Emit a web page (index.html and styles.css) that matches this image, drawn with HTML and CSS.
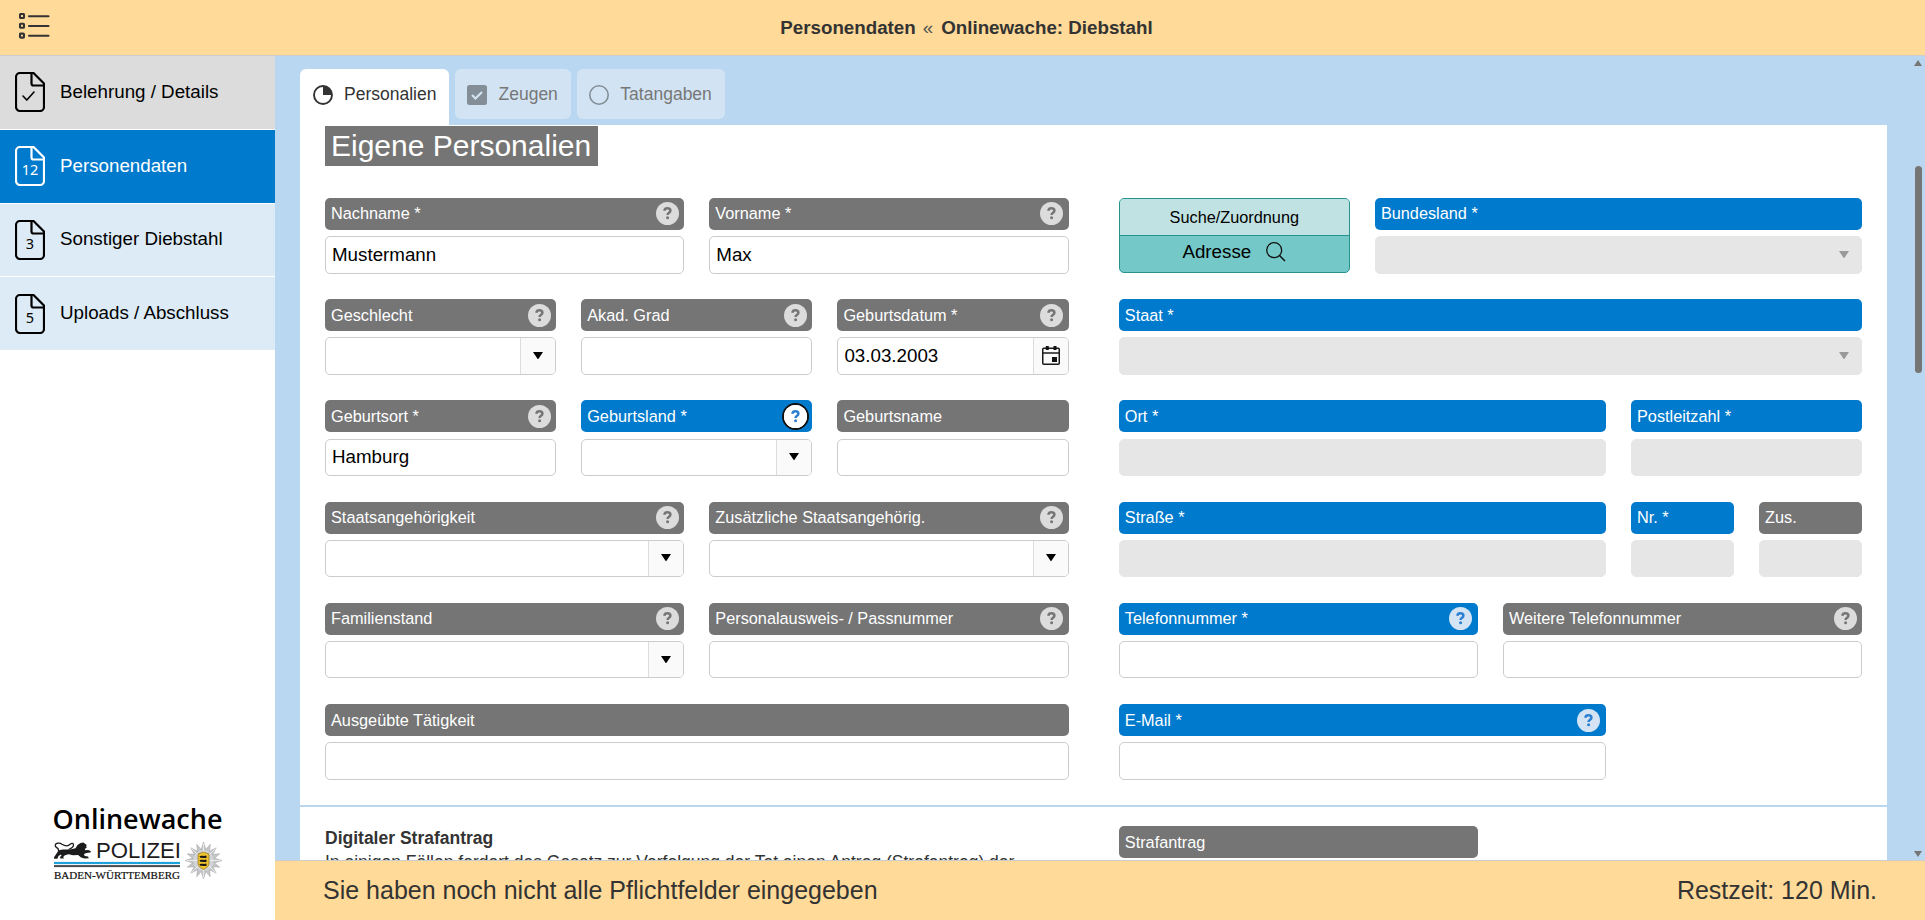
FILE: index.html
```html
<!DOCTYPE html>
<html lang="de">
<head>
<meta charset="utf-8">
<title>Onlinewache: Diebstahl</title>
<link rel="stylesheet" href="styles.css">
</head>
<body>
<svg class="defs" aria-hidden="true">
  <symbol id="help" viewBox="0 0 23 23"><circle cx="11.5" cy="11.5" r="11.5" class="help-disc"/><path class="help-mark" d="M8.300 8.700C8.600 7.100 9.700 6.300 11.400 6.300c1.800 0 3 .9 3 2.400 0 1.200-.8 1.700-1.700 2.300-.8.500-1.100.9-1.100 1.900"/><circle class="help-dot" cx="11.600" cy="15.700" r="1.500"/></symbol>
  <symbol id="file" viewBox="0 0 30 40"><path d="M5 1h13.500L29 11.500V35a4 4 0 0 1-4 4H5a4 4 0 0 1-4-4V5a4 4 0 0 1 4-4Z" fill="none" stroke="currentColor" stroke-width="2.200"/><path d="M16.500 1v10.500a2 2 0 0 0 2 2H29" fill="none" stroke="currentColor" stroke-width="2.200"/></symbol>
  <symbol id="tri" viewBox="0 0 10 8" preserveAspectRatio="none"><path d="M0 0h10L5 8Z" fill="currentColor"/></symbol>
</svg>
<header class="topbar">
  <svg class="menu" viewBox="0 0 31 27"><g fill="none" stroke="#333" stroke-width="2.100"><rect x="1" y="1" width="4" height="4" rx=".8"/><rect x="1" y="10.800" width="4" height="4" rx=".8"/><rect x="1" y="20.600" width="4" height="4" rx=".8"/><path d="M10 3.200h19.500M10 13h19.500M10 22.800h19.500" stroke-linecap="round"/></g></svg>
  <h1 class="crumb"><span>Personendaten</span><span class="sep">«</span><span>Onlinewache: Diebstahl</span></h1>
</header>
<div class="body">
  <aside class="side">
    <nav class="nav">
      <a class="item done"><span class="doc"><svg><use href="#file"/></svg><svg class="tick" viewBox="0 0 13 10"><path d="M1 5l3.800 4L12 1" fill="none" stroke="currentColor" stroke-width="1.600" stroke-linecap="round"/></svg></span>Belehrung / Details</a>
      <a class="item active"><span class="doc"><svg><use href="#file"/></svg><b>12</b></span>Personendaten</a>
      <a class="item"><span class="doc"><svg><use href="#file"/></svg><b>3</b></span>Sonstiger Diebstahl</a>
      <a class="item"><span class="doc"><svg><use href="#file"/></svg><b>5</b></span>Uploads / Abschluss</a>
    </nav>
    <svg class="logo" viewBox="0 -12 172 88">
      <text x="-.5" y="21" class="lg-title" textLength="170" lengthAdjust="spacingAndGlyphs">Onlinewache</text>
      <path d="M5.500 42.500C9 41 13 41.800 17 41.500l5.500-1.200L24.500 37l3-2 3-.5 1.800 1.500 1.400.7-.6 1.600.8 1-1.500 1.200-.6 1.800 3.200-.2 2.800.8-.3 1.600-4 .6-2.500.8.700 2 3.300.6.800 1.800-4 .3-3.700-1.200-3-2.500-5 .3-4.500-1-3.700 1-1.700 1.800.7 1.600-3.400-.2-.6-1.400 1.600-1.200-.6-1.200-2.400 1.500-1.200 2.600-3 .1-.4-1.500 1-1.200Z" fill="#1b1b1b"/>
      <path d="M5.500 43C6.500 39.500 2 40 2.200 37.500 2.600 34.500 7 34.800 9 36.200c3 2 6.500 1.800 8.500-.2 1.300-1.200 3-.8 3 1 0 2-2.500 3.500-5 4.500" fill="none" stroke="#1b1b1b" stroke-width="1.300"/>
      <text x="43" y="49.700" class="lg-pol" textLength="85" lengthAdjust="spacingAndGlyphs">POLIZEI</text>
      <rect x="1" y="53.900" width="126" height="2.200" fill="#1ea2dc"/>
      <rect x="1" y="57.100" width="126" height="2" fill="#4a4a4a"/>
      <text x="1" y="70.500" class="lg-bw" textLength="126" lengthAdjust="spacingAndGlyphs">BADEN-WÜRTTEMBERG</text>
      <g transform="translate(150.500 52.500)">
        <g fill="#c4c5c8" stroke="#a2a3a7" stroke-width=".5">
          <path id="ray" d="M0-18.500L3-9V9L0 18.500-3 9V-9Z"/>
          <use href="#ray" transform="rotate(22.500) scale(.95)"/><use href="#ray" transform="rotate(45) scale(.97)"/><use href="#ray" transform="rotate(67.500) scale(.95)"/><use href="#ray" transform="rotate(90)"/><use href="#ray" transform="rotate(112.500) scale(.95)"/><use href="#ray" transform="rotate(135) scale(.97)"/><use href="#ray" transform="rotate(157.500) scale(.95)"/>
        </g>
        <circle r="10.500" fill="#d3d4d6"/>
        <path d="M0-17V17M-17 0H17M-12-12L12 12M12-12L-12 12" stroke="#f1f1f1" stroke-width=".8"/>
        <path d="M-5.500-6.500L0-8.500l5.500 2v9C5.500 6 3 7.500 0 9-3 7.500-5.500 6-5.500 2.500Z" fill="#eec22f" stroke="#8b7224" stroke-width=".7"/>
        <path d="M-3.500-3.300C-1.500-4.800-1-2.600 3-4M-3.500.7C-1.500-.8-1 1.400 3 0M-3.500 4.700C-1.500 3.200-1 5.400 3 4" fill="none" stroke="#171717" stroke-width="2.100"/>
      </g>
    </svg>
  </aside>
  <div class="work">
    <div class="view">
      <main class="content">
        <div class="tabs">
          <div class="tab on"><svg class="ti" viewBox="0 0 20 20"><circle cx="10" cy="10" r="9" fill="none" stroke="#333" stroke-width="1.900"/><path d="M10 1a9 9 0 0 1 9 9h-9Z" fill="#333"/></svg>Personalien</div>
          <div class="tab"><svg class="ti" viewBox="0 0 20 20"><rect width="20" height="20" rx="2.500" fill="#848e96"/><path d="M5 10l3.500 3.500L15 7" fill="none" stroke="#d2e4f3" stroke-width="2.200"/></svg>Zeugen</div>
          <div class="tab"><svg class="ti" viewBox="0 0 20 20"><circle cx="10" cy="10" r="9.200" fill="none" stroke="#848e96" stroke-width="1.600"/></svg>Tatangaben</div>
        </div>
        <section class="panel">
          <h2 class="title">Eigene Personalien</h2>
          <div class="cols">
            <div class="grid">
              <div class="field s6"><div class="label">Nachname *<svg class="help"><use href="#help"/></svg></div><div class="ctl">Mustermann</div></div>
              <div class="field s6"><div class="label">Vorname *<svg class="help"><use href="#help"/></svg></div><div class="ctl">Max</div></div>
              <div class="field s4"><div class="label">Geschlecht<svg class="help"><use href="#help"/></svg></div><div class="ctl"><span class="btn"><svg class="tri"><use href="#tri"/></svg></span></div></div>
              <div class="field s4"><div class="label">Akad. Grad<svg class="help"><use href="#help"/></svg></div><div class="ctl"></div></div>
              <div class="field s4"><div class="label">Geburtsdatum *<svg class="help"><use href="#help"/></svg></div><div class="ctl">03.03.2003<span class="btn"><svg class="cal" viewBox="0 0 18 19"><rect x=".75" y="2.250" width="16.500" height="16" rx="1" fill="none" stroke="#1a1a1a" stroke-width="1.500"/><path d="M1 7h16" stroke="#1a1a1a" stroke-width="1.300"/><path d="M3.800 0h3v4h-3zM11.500 0h3v4h-3zM10 11h5v5h-5z" fill="#111"/></svg></span></div></div>
              <div class="field s4"><div class="label">Geburtsort *<svg class="help"><use href="#help"/></svg></div><div class="ctl">Hamburg</div></div>
              <div class="field s4 req"><div class="label">Geburtsland *<svg class="help focus"><use href="#help"/></svg></div><div class="ctl"><span class="btn"><svg class="tri"><use href="#tri"/></svg></span></div></div>
              <div class="field s4"><div class="label">Geburtsname</div><div class="ctl"></div></div>
              <div class="field s6"><div class="label">Staatsangehörigkeit<svg class="help"><use href="#help"/></svg></div><div class="ctl"><span class="btn"><svg class="tri"><use href="#tri"/></svg></span></div></div>
              <div class="field s6"><div class="label">Zusätzliche Staatsangehörig.<svg class="help"><use href="#help"/></svg></div><div class="ctl"><span class="btn"><svg class="tri"><use href="#tri"/></svg></span></div></div>
              <div class="field s6"><div class="label">Familienstand<svg class="help"><use href="#help"/></svg></div><div class="ctl"><span class="btn"><svg class="tri"><use href="#tri"/></svg></span></div></div>
              <div class="field s6"><div class="label">Personalausweis- / Passnummer<svg class="help"><use href="#help"/></svg></div><div class="ctl"></div></div>
              <div class="field s12"><div class="label">Ausgeübte Tätigkeit</div><div class="ctl"></div></div>
            </div>
            <div class="grid">
              <div class="search s4"><div class="search-top">Suche/Zuordnung</div><div class="search-main">Adresse<svg class="mag" viewBox="0 0 20 20"><circle cx="8.200" cy="8.200" r="7.500" fill="none" stroke="#111" stroke-width="1.300"/><path d="M13.500 13.500l5.500 5.500" stroke="#111" stroke-width="1.500"/></svg></div></div>
              <div class="field s8 req off"><div class="label">Bundesland *</div><div class="ctl"><span class="btn"><svg class="tri"><use href="#tri"/></svg></span></div></div>
              <div class="field s12 req off"><div class="label">Staat *</div><div class="ctl"><span class="btn"><svg class="tri"><use href="#tri"/></svg></span></div></div>
              <div class="field s8 req off"><div class="label">Ort *</div><div class="ctl"></div></div>
              <div class="field s4 req off"><div class="label">Postleitzahl *</div><div class="ctl"></div></div>
              <div class="field s8 req off"><div class="label">Straße *</div><div class="ctl"></div></div>
              <div class="field s2 req off"><div class="label">Nr. *</div><div class="ctl"></div></div>
              <div class="field s2 off"><div class="label">Zus.</div><div class="ctl"></div></div>
              <div class="field s6 req"><div class="label">Telefonnummer *<svg class="help"><use href="#help"/></svg></div><div class="ctl"></div></div>
              <div class="field s6"><div class="label">Weitere Telefonnummer<svg class="help"><use href="#help"/></svg></div><div class="ctl"></div></div>
              <div class="field s8 req"><div class="label">E-Mail *<svg class="help"><use href="#help"/></svg></div><div class="ctl"></div></div>
            </div>
          </div>
        </section>
        <section class="panel more">
          <div class="cols">
            <div class="note"><h3>Digitaler Strafantrag</h3><p>In einigen Fällen fordert das Gesetz zur Verfolgung der Tat einen Antrag (Strafantrag) der</p></div>
            <div class="grid"><div class="field s6"><div class="label">Strafantrag</div></div></div>
          </div>
        </section>
      </main>
      <div class="scroll"><svg class="arr up"><use href="#tri"/></svg><div class="track"><div class="thumb"></div></div><svg class="arr"><use href="#tri"/></svg></div>
    </div>
    <footer class="foot"><span>Sie haben noch nicht alle Pflichtfelder eingegeben</span><span>Restzeit: 120 Min.</span></footer>
  </div>
</div>
</body>
</html>
```
FILE: styles.css
```css
* { box-sizing: border-box; }
html, body { margin: 0; height: 920px; overflow: hidden; }
body { display: flex; flex-direction: column; background: #fff; color: #333; font: 17.5px "Liberation Sans", Arial, sans-serif; }
svg { display: block; flex: none; }
h1, h2, h3, p { margin: 0; }
.defs { display: none; }

.topbar { flex: none; height: 56px; background: #ffda98; border-bottom: 1px solid #ccc; display: grid; grid-template-columns: 1fr auto 1fr; align-items: center; padding-left: 19px; }
.menu { width: 31px; height: 27px; margin-top: -3px; }
.crumb { grid-column: 2; display: flex; font-size: 18.750px; line-height: 24px; margin: 0 11px 0 0; }
.sep { font-weight: 400; color: #555; margin: 0 8px 0 7px; }

.body { flex: 1; display: flex; min-height: 0; }
.side { width: 275px; display: flex; flex-direction: column; justify-content: space-between; background: #fff; }
.nav { display: flex; flex-direction: column; gap: 1px; }
.item { height: 72.800px; padding: 0 0 1px 15px; display: flex; align-items: center; gap: 15px; font-size: 18.750px; line-height: 20px; color: #000; background: #dcebf6; }
.item.done { background: #dcdcdc; }
.item.active { background: #007acc; color: #fff; }
.doc { position: relative; width: 30px; height: 40px; margin-top: 1px; }
.doc svg { width: 30px; height: 40px; }
.doc b { position: absolute; left: 0; right: 0; top: 14px; text-align: center; font: 14.500px/19px "Noto Sans", sans-serif; }
.doc .tick { position: absolute; left: 7px; top: 19px; width: 13px; height: 10px; }
.logo { width: 172px; height: 88px; margin: 0 0 36px 53px; overflow: visible; }
.lg-title { font: 600 27px "Open Sans", "Noto Sans", sans-serif; fill: #000; }
.lg-pol { font: 22px "Liberation Sans", sans-serif; fill: #1b1b1b; }
.lg-bw { font: 10.500px "Liberation Serif", serif; fill: #111; stroke: #111; stroke-width: .2px; }

.work { flex: 1; display: flex; flex-direction: column; min-width: 0; background: #b9d7f0; }
.view { flex: 1; min-height: 0; display: flex; justify-content: space-between; padding-left: 25px; overflow: hidden; }
.content { width: 1587px; padding-top: 13px; }
.tabs { display: flex; gap: 6px; height: 56px; }
.tab { height: 50px; display: flex; align-items: center; gap: 11.500px; padding: 0 13px 0 12px; border-radius: 6px; background: #d2e4f3; color: #777; }
.tab.on { height: 56px; padding: 0 13px 6px 13px; gap: 11px; width: 149px; border-radius: 6px 6px 0 0; background: #fff; color: #333; }
.ti { width: 20px; height: 20px; margin-top: 2px; }
.panel { background: #fff; padding: 1px 25px 25px; height: 680px; }
.title { width: 273px; height: 40px; padding-left: 6px; font-weight: 400; font-size: 30px; line-height: 40px; color: #fff; background: #757575; }
.cols { display: grid; grid-template-columns: 743.600px 743.300px; gap: 50.200px; margin-top: 31.900px; }
.grid { display: grid; grid-template-columns: repeat(12, minmax(0, 1fr)); column-gap: 25px; row-gap: 25.450px; align-content: start; }
.s2 { grid-column: span 2; }
.s4 { grid-column: span 4; }
.s6 { grid-column: span 6; }
.s8 { grid-column: span 8; }
.s12 { grid-column: span 12; }
.field { display: flex; flex-direction: column; gap: 6.200px; }
.label { height: 32.200px; padding: 0 5.500px 0 6px; display: flex; align-items: center; justify-content: space-between; border-radius: 5px; background: #757575; color: #fff; font-size: 16.300px; white-space: nowrap; }
.req .label { background: #007acc; }
.ctl { height: 37.400px; padding-left: 6px; display: flex; align-items: center; border: 1px solid #ccc; border-radius: 5px; background: #fff; color: #000; font-size: 18.750px; overflow: hidden; }
.off .ctl { background: #e6e6e6; border-color: #e6e6e6; }
.btn { margin-left: auto; width: 35px; height: 100%; display: flex; align-items: center; justify-content: center; border-left: 1px solid #ddd; background: #fafafa; }
.off .btn { background: none; border: 0; color: #999; }
.tri { width: 10px; height: 7.500px; margin-top: -1px; }
.cal { width: 18px; height: 19px; margin-top: -2px; }
.help { width: 23px; height: 23px; overflow: visible; color: #757575; --disc: #dcdcdc; }
.req .help { color: #2a7fd0; --disc: #d5e4f4; }
.help.focus { --disc: #fff; width: 27px; height: 27px; margin-right: -2px; border: 2px solid #111; border-radius: 50%; background: #fff; }
.help-disc { fill: var(--disc); }
.help-mark { fill: none; stroke: currentColor; stroke-width: 2.500; }
.help-dot { fill: currentColor; }
.search { height: 75px; border: 1px solid #26938f; border-radius: 5px; overflow: hidden; color: #000; background: #74c9c8; display: flex; flex-direction: column; }
.search-top { height: 37px; line-height: 36px; text-align: center; font-size: 16.300px; background: #c0e2e2; border-bottom: 1px solid #26938f; }
.search-main { flex: 1; display: flex; justify-content: center; align-items: center; gap: 15px; font-size: 18.750px; padding-bottom: 3px; }
.mag { width: 20px; height: 20px; }
.more { margin-top: 2px; padding-top: 19px; }
.more .cols { margin: 0; }
.note { font-size: 17.500px; line-height: 24px; }
.note h3 { font-size: 17.500px; line-height: 24px; }
.note p { white-space: nowrap; }

.scroll { width: 14px; display: flex; flex-direction: column; align-items: center; padding: 4px 0 3px; color: #757575; }
.track { flex: 1; width: 7px; }
.arr { width: 8px; height: 6px; }
.arr.up { transform: rotate(180deg); }
.thumb { width: 7px; height: 207px; margin-top: 100px; border-radius: 4px; background: #757575; }
.foot { flex: none; height: 60px; border-top: 1px solid #ccc; background: #ffda98; display: flex; align-items: center; justify-content: space-between; padding: 0 48px; font-size: 25px; }
```
